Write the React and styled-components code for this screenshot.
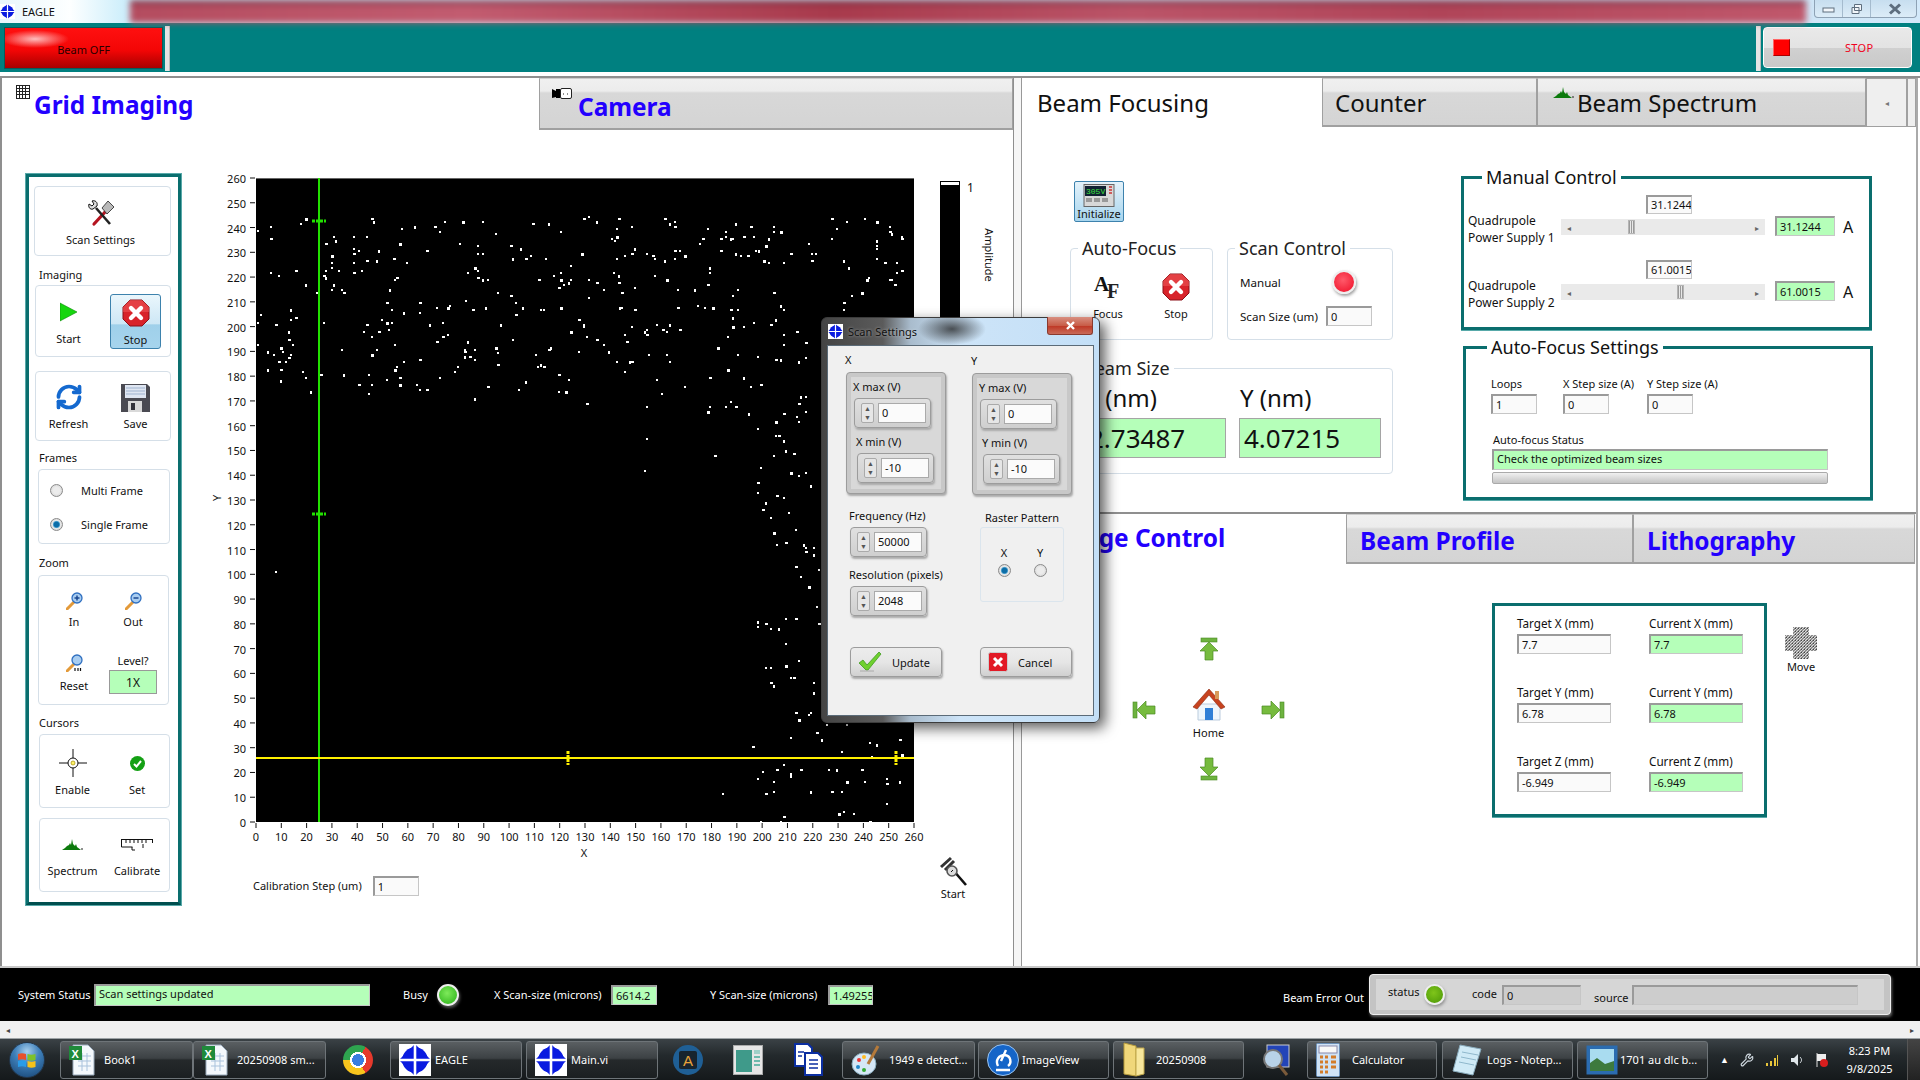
import React from "react";
import styled, { createGlobalStyle } from "styled-components";
import { RefreshCw, Wrench } from "lucide-react";

const UI = `"Noto Sans", "Liberation Sans", sans-serif`;
const GREEN = "#b5ffb9";
const TEAL = "#0a6e6e";

const GlobalStyle = createGlobalStyle`
  html, body { margin: 0; padding: 0; background: #fff; }
  body { font-family: ${UI}; font-size: 11px; color: #111; }
  * { box-sizing: border-box; }
`;

const Root = styled.div`
  position: relative;
  width: 1920px;
  height: 1080px;
  display: flex;
  flex-direction: column;
  overflow: hidden;
  background: #fff;
`;

/* title bar */
const TitleBar = styled.div`
  flex: 0 0 23px;
  display: flex;
  align-items: center;
  background: linear-gradient(90deg, #e8f6fc 0, #fdffff 70px, #cdeefb 125px, #cfe6f7 1810px, #d3e9fa 100%);
`;
const TitleText = styled.span`
  margin-left: 7px;
  width: 34px;
  font-size: 11px;
`;
const RedBlur = styled.div`
  flex: 0 0 1676px;
  margin-left: 74px;
  height: 23px;
  filter: blur(3px);
  background:
    linear-gradient(180deg, rgba(70, 20, 40, 0.55) 0, rgba(70, 20, 40, 0) 7px),
    linear-gradient(90deg, #b44c5f 0, #c25c70 20%, #a83a4c 42%, #bb5468 60%, #b04458 78%, #c0586c 100%);
`;
const WinButtons = styled.div`
  margin-left: 8px;
  display: grid;
  grid-template-columns: 28px 28px 47px;
  width: 103px;
  height: 18px;
  align-self: flex-start;
  border: 1px solid #8ea2b5;
  border-top: 0;
  border-radius: 0 0 4px 4px;
  background: linear-gradient(180deg, #c7deef, #dcecf8);
`;
const WinBtn = styled.div`
  display: flex;
  align-items: center;
  justify-content: center;
  border-right: 1px solid #a5bbce;
  &:last-child { border-right: 0; }
`;

/* teal toolbar */
const Toolbar = styled.div`
  flex: 0 0 49px;
  display: flex;
  align-items: flex-start;
  padding-top: 4px;
  background: #008080;
`;
const BeamOff = styled.div`
  margin-left: 4px;
  width: 159px;
  height: 42px;
  display: flex;
  align-items: center;
  justify-content: center;
  color: #2a0000;
  font-size: 11px;
  padding-top: 3px;
  border: 1px solid #0a5a5a;
  background:
    radial-gradient(ellipse 34px 9px at 30px 11px, rgba(255, 220, 220, 0.85), rgba(255, 0, 0, 0)),
    linear-gradient(180deg, #ff1010 0, #f40606 55%, #a80000 100%);
`;
const Sash = styled.div`
  flex: 0 0 5px;
  height: 45px;
  margin: ${(p) => p.$margin};
  background: #e4e4e4;
  border-right: 1px solid #bbb;
`;
const StopBtn = styled.div`
  width: 149px;
  height: 41px;
  margin-right: 8px;
  display: flex;
  align-items: center;
  border: 1px solid #fff;
  border-radius: 4px;
  background: linear-gradient(180deg, #e9e9e9 0, #e3e3e3 50%, #d0d0d0 52%, #c9c9c9 100%);
  color: #f00020;
  font-size: 11px;
`;
const StopSquare = styled.div`
  width: 17px;
  height: 17px;
  margin-left: 9px;
  background: #f00;
  border: 1px solid #a00;
  border-left-color: #f66;
  border-top-color: #f66;
`;
const StopLabel = styled.span`
  margin-left: 55px;
  letter-spacing: 0.3px;
`;

const TopGap = styled.div`
  flex: 0 0 6px;
  background: #fff;
  border-bottom: 2px solid #8f8f8f;
`;

/* panes */
const Workspace = styled.div`
  flex: 0 0 888px;
  display: flex;
  min-height: 0;
`;
const LeftPane = styled.div`
  width: 1014px;
  border-left: 2px solid #8f8f8f;
  border-right: 1px solid #8f8f8f;
  display: flex;
  flex-direction: column;
`;
const PaneSash = styled.div`
  width: 8px;
  background: #f6f6f6;
  border-right: 1px solid #999;
`;
const RightPane = styled.div`
  width: 896px;
  border-right: 2px solid #aaa;
  display: flex;
  flex-direction: column;
`;
const RightUpper = styled.div`
  flex: 0 0 434px;
  display: flex;
  flex-direction: column;
`;
const RightLower = styled.div`
  flex: 1;
  display: flex;
  flex-direction: column;
  border-top: 2px solid #8f8f8f;
`;

const TabStrip = styled.div`
  display: flex;
  flex: 0 0 ${(p) => p.$h}px;
`;
const Tab = styled.div`
  flex: 0 0 ${(p) => p.$w}px;
  display: flex;
  align-items: flex-start;
  padding-left: ${(p) => p.$pl || 0}px;
  padding-top: ${(p) => p.$pt ?? 7}px;
  font-size: ${(p) => (p.$blue ? 24.4 : 24)}px;
  line-height: 34px;
  font-weight: ${(p) => (p.$blue ? 700 : 400)};
  color: ${(p) => (p.$blue ? "#2300ff" : "#111")};
  white-space: nowrap;
  ${(p) =>
    p.$active
      ? "background: #fff;"
      : `background: linear-gradient(180deg, #f0f0f0 0, #ececec 12px, #d8d8d8 14px, #d4d4d4 100%);
         border: 1px solid #a0a0a0; border-bottom-width: 2px; border-top-color: #ccc;`}
`;
const TabIcon = styled.span`
  display: flex;
  margin-right: ${(p) => p.$mr}px;
  margin-top: ${(p) => p.$mt}px;
`;
const ScrollTab = styled.div`
  flex: 0 0 ${(p) => p.$w}px;
  display: flex;
  align-items: center;
  justify-content: center;
  background: #efefef;
  border: 1px solid #a0a0a0;
  color: #777;
  font-size: 8px;
`;

/* left pane body */
const LeftBody = styled.div`
  flex: 1;
  display: flex;
  align-items: flex-start;
  padding: 40px 0 0 24px;
`;
const SideBar = styled.div`
  flex: 0 0 155px;
  height: 731px;
  margin-top: 4px;
  padding: 9px 0 0 4px;
  border: 3px solid ${TEAL};
  border-bottom-color: #004f4f;
  box-shadow: 0 0 0 1px #58a9a9;
  display: flex;
  flex-direction: column;
`;
const SideLabel = styled.div`
  height: 14px;
  line-height: 14px;
  margin-top: ${(p) => p.$mt}px;
  margin-left: ${(p) => p.$ml}px;
  font-size: 11px;
`;
const SideBox = styled.div`
  width: ${(p) => p.$w}px;
  height: ${(p) => p.$h}px;
  margin-top: ${(p) => p.$mt}px;
  margin-left: ${(p) => p.$ml}px;
  padding-top: ${(p) => p.$pt || 0}px;
  border: 1px solid #d5dfe8;
  border-radius: 4px;
  display: grid;
  grid-template-columns: ${(p) => p.$cols || "65px 1fr"};
  align-content: start;
`;
const ToolItem = styled.div`
  display: flex;
  flex-direction: column;
  align-items: center;
  gap: ${(p) => p.$gap ?? 6}px;
  margin-top: ${(p) => p.$mt || 0}px;
`;
const ActiveTool = styled(ToolItem)`
  width: 51px;
  height: 55px;
  justify-self: center;
  margin-top: -4px;
  padding-top: 4px;
  border: 1px solid #3d82ad;
  border-radius: 3px;
  background: linear-gradient(180deg, #eaf6fc 0, #cde7f5 55%, #9fd0ea 56%, #a6d4ed 100%);
`;
const ToolIcon = styled.div`
  width: 100%;
  height: 28px;
  display: flex;
  align-items: center;
  justify-content: center;
`;
const ToolLabel = styled.div`
  line-height: 14px;
  font-size: 11px;
  white-space: nowrap;
`;
const RadioRow = styled.div`
  grid-column: 1 / -1;
  height: 34px;
  display: flex;
  align-items: center;
  gap: 18px;
  padding-left: 11px;
`;
const Radio = styled.div`
  width: 13px;
  height: 13px;
  flex: none;
  border-radius: 50%;
  border: 1px solid #8a8a8a;
  background: ${(p) =>
    p.$on
      ? "radial-gradient(circle, #0d6ea8 0 32%, #5aa9d4 42%, #e8e8e8 52%, #c8c8c8 100%)"
      : "radial-gradient(circle, #ececec 0 40%, #cfcfcf 100%)"};
`;
const LevelBox = styled.div`
  width: 48px;
  height: 24px;
  display: flex;
  align-items: center;
  justify-content: center;
  font-size: 12px;
  background: ${GREEN};
  border: 1px solid #999;
`;
const LevelItem = styled.div`
  display: flex;
  flex-direction: column;
  align-items: center;
  gap: 2px;
  align-self: end;
  margin-bottom: -1px;
`;

const PlotColumn = styled.div`
  flex: 0 0 800px;
  margin-left: 24px;
  display: flex;
  flex-direction: column;
`;
const PlotSvg = styled.svg`
  display: block;
  overflow: visible;
  font-family: ${UI};
`;
const CalibRow = styled.div`
  height: 48px;
  padding: 0 38px 5px 48px;
  display: flex;
  align-items: flex-end;
`;
const CalibLabel = styled.span`
  line-height: 20px;
  font-size: 11px;
  margin-right: 11px;
  white-space: nowrap;
`;
const StartTool = styled.div`
  margin-left: auto;
  display: flex;
  flex-direction: column;
  align-items: center;
  gap: 1px;
  margin-bottom: -5px;
`;

/* value boxes */
const Field = styled.div`
  width: ${(p) => p.$w}px;
  height: ${(p) => p.$h || 20}px;
  line-height: ${(p) => p.$lh || (p.$h || 20) - 2}px;
  margin: ${(p) => p.$margin || 0};
  padding-left: 3px;
  flex: none;
  font-size: 11px;
  white-space: nowrap;
  overflow: hidden;
  color: #111;
  background: ${(p) => (p.$green ? GREEN : p.$gray ? "#cdcdcd" : "#fafafa")};
  border: 1px solid #c6c6c6;
  border-top: 2px solid #9a9a9a;
  border-left: 2px solid #9a9a9a;
`;

/* right upper */
const UpperBody = styled.div`
  flex: 1;
  display: flex;
  padding-left: 48px;
`;
const UpperLeft = styled.div`
  flex: 0 0 323px;
  display: flex;
  flex-direction: column;
`;
const UpperRight = styled.div`
  flex: 0 0 413px;
  margin-left: 68px;
  display: flex;
  flex-direction: column;
`;
const InitBtn = styled.div`
  width: 50px;
  height: 41px;
  margin: 54px 0 0 4px;
  display: flex;
  flex-direction: column;
  align-items: center;
  font-size: 11px;
  line-height: 13px;
  padding-top: 2px;
  border: 1px solid #3d82ad;
  border-radius: 2px;
  background: linear-gradient(180deg, #e4f2fa, #a7d5ee);
`;
const GroupRow = styled.div`
  display: flex;
  margin-top: 14px;
  gap: 14px;
`;
const Group = styled.fieldset`
  width: ${(p) => p.$w}px;
  height: ${(p) => p.$h}px;
  margin: ${(p) => p.$margin || 0};
  padding: 0;
  min-width: 0;
  border: 1px solid #d5dfe8;
  border-radius: 4px;
`;
const GroupLegend = styled.legend`
  margin-left: ${(p) => p.$ml || 7}px;
  padding: 0 4px;
  font-size: 18px;
  line-height: 24px;
  color: #222;
`;
const AfGrid = styled.div`
  display: grid;
  grid-template-columns: 68px 68px;
  padding: 13px 0 0 3px;
`;
const ScanRows = styled.div`
  padding: 10px 0 0 12px;
  display: flex;
  flex-direction: column;
`;
const ScanRow = styled.div`
  height: ${(p) => p.$h}px;
  display: flex;
  align-items: center;
  justify-content: flex-start;
  font-size: 11.6px;
`;
const ScanLabel = styled.span`
  width: ${(p) => p.$w}px;
  white-space: nowrap;
`;
const BeamGrid = styled.div`
  display: grid;
  grid-template-columns: 142px 142px;
  column-gap: 13px;
  padding: 1px 0 0 13px;
`;
const BeamHead = styled.div`
  font-size: 24px;
  line-height: 34px;
  height: 34px;
  padding-left: 1px;
`;
const BeamValue = styled.div`
  height: 40px;
  margin-top: 3px;
  padding-left: 4px;
  font-size: 26px;
  line-height: 38px;
  background: ${GREEN};
  border: 1px solid #a5a5a5;
`;
const TealGroup = styled.fieldset`
  width: ${(p) => p.$w}px;
  height: 165px;
  margin: ${(p) => p.$margin};
  padding: 0;
  min-width: 0;
  border: 3px solid ${TEAL};
  box-shadow: 0 1px 0 #58a9a9;
`;
const TealLegend = styled.legend`
  margin-left: ${(p) => p.$ml}px;
  padding: 0 4px;
  font-size: 18px;
  line-height: 24px;
`;
const ManualRows = styled.div`
  padding: 6px 0 0 4px;
`;
const ManualRow = styled.div`
  height: 65px;
  display: grid;
  grid-template-columns: 93px 204px 10px 60px 22px;
  grid-template-rows: 19px auto;
`;
const SetPoint = styled(Field)`
  grid-column: 2;
  grid-row: 1;
  justify-self: start;
  margin-left: 85px;
  height: 19px;
  line-height: 16px;
  font-size: 11px;
`;
const QuadLabel = styled.div`
  grid-column: 1;
  grid-row: 2;
  margin-top: -2px;
  line-height: 17px;
  font-size: 12px;
  white-space: nowrap;
`;
const Slider = styled.div`
  grid-column: 2;
  grid-row: 2;
  margin-top: 5px;
  height: 16px;
  position: relative;
  display: flex;
  align-items: center;
  justify-content: space-between;
  padding: 0 6px;
  color: #666;
  font-size: 8px;
  background: #eaeaea;
`;
const SliderThumb = styled.div`
  position: absolute;
  top: 1px;
  width: 7px;
  height: 14px;
  background: repeating-linear-gradient(90deg, #9a9a9a 0 1px, #e8e8e8 1px 2px);
  border: 1px solid #b5b5b5;
`;
const OutCell = styled(Field)`
  grid-column: 4;
  grid-row: 2;
  margin-top: 2px;
`;
const UnitCell = styled.div`
  grid-column: 5;
  grid-row: 2;
  padding-left: 8px;
  font-size: 16px;
  line-height: 24px;
  margin-top: 1px;
`;
const StepGrid = styled.div`
  display: grid;
  grid-template-columns: 72px 84px auto;
  padding: 18px 0 0 25px;
  row-gap: 3px;
`;
const StepLabel = styled.div`
  line-height: 14px;
  font-size: 11px;
  white-space: nowrap;
`;
const StatusLabel = styled.div`
  margin: 19px 0 2px 27px;
  line-height: 14px;
  font-size: 11px;
`;
const StatusValue = styled(Field)`
  margin-left: 26px;
`;
const Progress = styled.div`
  width: 336px;
  height: 12px;
  margin: 2px 0 0 26px;
  border: 1px solid #aaa;
  border-radius: 2px;
  background: linear-gradient(180deg, #f0f0f0, #d5d5d5 60%, #c4c4c4);
`;

/* right lower */
const LowerBody = styled.div`
  flex: 1;
  display: flex;
  align-items: flex-start;
`;
const MoveGrid = styled.div`
  flex: none;
  margin: 73px 0 0 89px;
  width: 194px;
  display: grid;
  grid-template-columns: 65px 65px 64px;
  grid-template-rows: 51px 69px 24px;
  justify-items: center;
`;
const ArrowCell = styled.div`
  grid-column: ${(p) => p.$col};
  grid-row: ${(p) => p.$row};
  margin-top: ${(p) => p.$mt || 0}px;
  display: flex;
`;
const HomeCell = styled.div`
  grid-column: 2;
  grid-row: 2;
  display: flex;
  flex-direction: column;
  align-items: center;
  gap: 3px;
  font-size: 11px;
`;
const TargetBox = styled.div`
  flex: none;
  width: 275px;
  height: 214px;
  margin: 39px 0 0 187px;
  padding: 10px 0 0 22px;
  border: 3px solid ${TEAL};
  box-shadow: 0 1px 0 #58a9a9;
  display: grid;
  grid-template-columns: 132px 100px;
  grid-auto-rows: 69px;
`;
const TargetCell = styled.div`
  display: flex;
  flex-direction: column;
  gap: 4px;
  font-size: 11.7px;
  line-height: 14px;
`;
const MoveTool = styled.div`
  margin: 63px 0 0 18px;
  display: flex;
  flex-direction: column;
  align-items: center;
  font-size: 11px;
`;

/* status bar */
const StatusSep = styled.div`
  flex: 0 0 2px;
  background: #c8c8c8;
`;
const StatusBar = styled.div`
  flex: 0 0 53px;
  background: #000;
  display: flex;
  align-items: center;
  padding-left: 18px;
  color: #fff;
  font-size: 11px;
`;
const BarLabel = styled.span`
  flex: 0 0 ${(p) => p.$w}px;
  margin-left: ${(p) => p.$ml || 0}px;
  white-space: nowrap;
  margin-top: ${(p) => p.$mt || 0}px;
`;
const Led = styled.div`
  flex: none;
  width: ${(p) => p.$size || 22}px;
  height: ${(p) => p.$size || 22}px;
  border-radius: 50%;
  margin-left: ${(p) => p.$ml || 0}px;
  border: 2px solid #eee;
  background: radial-gradient(circle at 45% 40%, ${(p) => p.$light} 0, ${(p) => p.$dark} 90%);
  box-shadow: 1px 2px 3px rgba(120, 120, 120, 0.7);
`;
const ClusterBox = styled.div`
  flex: 0 0 522px;
  height: 41px;
  padding: 4px 6px;
  border: 1px solid #eee;
  border-radius: 4px;
  background: #c4c4c4;
  box-shadow: 1px 2px 3px rgba(170, 170, 170, 0.6);
`;
const ClusterInner = styled.div`
  height: 31px;
  display: flex;
  align-items: center;
  background: #d6d6d6;
  color: #111;
  font-size: 11px;
  padding-left: 12px;
`;

/* scroll strip */
const HScroll = styled.div`
  flex: 0 0 18px;
  display: flex;
  justify-content: space-between;
  align-items: center;
  padding: 0 6px;
  background: #f0f0f0;
  border-bottom: 1px solid #9da3a6;
  color: #444;
  font-size: 8px;
`;

/* taskbar */
const Taskbar = styled.div`
  flex: 0 0 41px;
  display: flex;
  align-items: center;
  color: #fff;
  font-size: 11px;
  background: linear-gradient(180deg, #3b4246 0, #23292c 40%, #15191b 100%);
`;
const StartOrb = styled.div`
  flex: none;
  width: 36px;
  height: 36px;
  margin-left: 9px;
  border-radius: 50%;
  border: 1px solid #23364a;
  display: flex;
  align-items: center;
  justify-content: center;
  background: radial-gradient(circle at 50% 25%, #a7cfee 0, #3f80ba 40%, #14416f 100%);
`;
const TaskBtn = styled.div`
  flex: 0 0 ${(p) => p.$w}px;
  margin-left: ${(p) => p.$ml || 0}px;
  height: 38px;
  display: flex;
  align-items: center;
  gap: ${(p) => p.$gap}px;
  padding-left: 8px;
  white-space: nowrap;
  overflow: hidden;
  border: 1px solid #6e7478;
  border-radius: 3px;
  background: linear-gradient(180deg, #5a5f62 0, #3c4144 45%, #25292b 50%, #1b1f21 100%);
`;
const PinIcon = styled.div`
  flex: 0 0 ${(p) => p.$w}px;
  margin-left: ${(p) => p.$ml || 0}px;
  height: 38px;
  display: flex;
  align-items: center;
  justify-content: center;
`;
const ChromeIcon = styled.div`
  width: 30px;
  height: 30px;
  border-radius: 50%;
  background:
    radial-gradient(circle, #3a7de0 0 27%, #fff 28% 38%, transparent 39%),
    conic-gradient(from 30deg, #e6392c 0 120deg, #f8c51d 120deg 240deg, #2ea44f 240deg 360deg);
`;
const Tray = styled.div`
  margin-left: 12px;
  display: flex;
  align-items: center;
  flex: 0 0 122px;
  gap: 11px;
  font-size: 9px;
`;
const Clock = styled.div`
  width: 56px;
  text-align: center;
  line-height: 18px;
  font-size: 11px;
`;
const ShowDesktop = styled.div`
  margin-left: 10px;
  flex: 0 0 13px;
  height: 41px;
  border-left: 1px solid #555;
  background: linear-gradient(180deg, #444, #222);
`;

/* dialog */
const Dialog = styled.div`
  position: absolute;
  left: 821px;
  top: 317px;
  width: 279px;
  height: 406px;
  padding: 0 5px 6px;
  display: flex;
  flex-direction: column;
  border: 1px solid #3c3c3c;
  border-radius: 6px;
  box-shadow: 5px 5px 14px rgba(0, 0, 0, 0.65);
  background:
    radial-gradient(ellipse 34px 16px at 130px 11px, rgba(30, 30, 30, 0.75), rgba(30, 30, 30, 0)),
    linear-gradient(90deg, #444 0, #5b5b5b 22%, #a9bccd 32%, #cde4f8 50%, #c3dff7 100%);
`;
const DialogTitle = styled.div`
  flex: 0 0 27px;
  display: flex;
  align-items: center;
  font-size: 11px;
  color: #111;
  position: relative;
  gap: 5px;
  padding-left: 1px;
  text-shadow: 0 0 3px rgba(255, 255, 255, 0.5);
`;
const CloseBtn = styled.div`
  position: absolute;
  right: 1px;
  top: -1px;
  width: 46px;
  height: 18px;
  display: flex;
  align-items: center;
  justify-content: center;
  border: 1px solid #8a3a2e;
  border-top: 0;
  border-radius: 0 0 3px 3px;
  background: linear-gradient(180deg, #d88f80 0, #c85d48 50%, #bf3a27 55%, #c96a58 100%);
`;
const DialogClient = styled.div`
  flex: 1;
  background: #f0f0f0;
  border: 1px solid #5b6b78;
  padding: 7px 0 0 17px;
  display: grid;
  grid-template-columns: 126px 122px;
  align-content: start;
`;
const DlgCol = styled.div`
  display: flex;
  flex-direction: column;
  margin-top: ${(p) => p.$mt || 0}px;
`;
const DlgText = styled.div`
  line-height: 14px;
  font-size: 11px;
  white-space: nowrap;
  margin: ${(p) => p.$margin || 0};
`;
const DlgGroup = styled.div`
  width: 100px;
  height: 122px;
  margin: 5px 0 0 1px;
  padding: 4px;
  border: 1px solid #9c9c9c;
  border-radius: 4px;
  background: #c8c8c8;
  box-shadow: 1px 2px 2px #aaa;
`;
const DlgGroupInner = styled.div`
  height: 100%;
  padding: 3px 0 0 2px;
  background: #d8d8d8;
`;
const Spinner = styled.div`
  width: 77px;
  height: 30px;
  margin: ${(p) => p.$margin};
  padding: 0 4px 0 6px;
  display: flex;
  align-items: center;
  gap: 4px;
  border: 1px solid #9c9c9c;
  border-radius: 4px;
  background: linear-gradient(180deg, #e0e0e0, #cfcfcf);
  box-shadow: 1px 2px 2px #aaa;
`;
const SpinArrows = styled.div`
  flex: 0 0 13px;
  height: 20px;
  display: grid;
  grid-template-rows: 1fr 1fr;
  border: 1px solid #aaa;
  border-radius: 2px;
  background: #e6e6e6;
  color: #555;
  font-size: 7px;
  line-height: 9px;
  text-align: center;
`;
const SpinInput = styled.div`
  flex: 1;
  height: 20px;
  line-height: 18px;
  padding-left: 3px;
  font-size: 11px;
  background: #fbfbfb;
  border: 1px solid #aaa;
`;
const RasterBox = styled.div`
  width: 84px;
  height: 75px;
  margin: 2px 0 0 9px;
  padding-top: 17px;
  border: 1px solid #dbe5ed;
  border-radius: 3px;
  display: grid;
  grid-template-columns: 36px 36px;
  justify-content: center;
  justify-items: center;
  align-content: start;
  row-gap: 4px;
`;
const DlgButton = styled.div`
  width: 92px;
  height: 30px;
  margin: ${(p) => p.$margin};
  display: flex;
  align-items: center;
  gap: 10px;
  padding-left: 7px;
  font-size: 11px;
  border: 1px solid #9c9c9c;
  border-radius: 4px;
  background: linear-gradient(180deg, #ececec 0, #e6e6e6 50%, #d0d0d0 100%);
  box-shadow: 1px 2px 2px #aaa;
`;

/* icons */
const EagleLogo = ({ size = 14 }) => (
  <svg width={size} height={size} viewBox="0 0 16 16" style={{ flex: "none" }}>
    <rect width="16" height="16" fill="#fff" />
    <path d="M8 0 16 8 8 16 0 8Z" fill="#0a1be0" />
    <circle cx="8" cy="8" r="6.4" fill="#0a1be0" />
    <path d="M8 0v16M0 8h16" stroke="#fff" strokeWidth="1.3" />
  </svg>
);
const GridIcon = () => (
  <svg width="14" height="14" viewBox="0 0 14 14">
    <rect x="0.5" y="0.5" width="13" height="13" fill="#fff" stroke="#222" />
    <path d="M3.5 0v14M6.5 0v14M9.5 0v14M0 3.5h14M0 6.5h14M0 9.5h14" stroke="#222" />
  </svg>
);
const CameraIcon = () => (
  <svg width="20" height="11" viewBox="0 0 20 11">
    <path d="M0 1l4 2V9L0 10Z" fill="#000" />
    <rect x="4" y="1" width="4" height="9" fill="#000" />
    <rect x="8.5" y="0.5" width="11" height="10" rx="1.5" fill="#fff" stroke="#222" />
    <path d="M11 6h1M15 6h1" stroke="#222" />
  </svg>
);
const ScanToolsIcon = () => (
  <svg width="28" height="28" viewBox="0 0 28 28">
    <path d="M7 25 19 12" stroke="#b51420" strokeWidth="3.2" strokeLinecap="round" />
    <path d="M15 9 21 2l6 6-7 7Z" fill="#b9b9b9" stroke="#222" strokeWidth="0.8" />
    <path d="M23 25 9 9" stroke="#222" strokeWidth="2.6" />
    <path d="M2 5l3 2 2-2-2-3c3-1 6 1 5 5l-4 3C3 11 1 8 2 5Z" fill="#dcdcdc" stroke="#111" strokeWidth="1" />
  </svg>
);
const PlayIcon = () => (
  <svg width="18" height="20" viewBox="0 0 18 20">
    <path d="M0 1 17 10 0 19Z" fill="#16d60e" stroke="#0a8a08" strokeWidth="0.6" />
  </svg>
);
const StopSign = ({ size = 28 }) => (
  <svg width={size} height={size} viewBox="0 0 28 28">
    <path d="M8 1h12l7 7v12l-7 7H8l-7-7V8Z" fill="#d8232a" stroke="#8c1118" />
    <path d="M8 1h12l7 7v5H1V8Z" fill="#ee5a5a" opacity="0.55" />
    <path d="M9 9 19 19M19 9 9 19" stroke="#fff" strokeWidth="4.4" strokeLinecap="round" />
  </svg>
);
const FloppyIcon = () => (
  <svg width="29" height="29" viewBox="0 0 29 29">
    <path d="M0 1h26l3 3v25H0Z" fill="#4a4a52" />
    <rect x="4" y="2" width="21" height="13" fill="#dfe6f2" />
    <path d="M5 5h19M5 8h19M5 11h19" stroke="#9fb3cf" />
    <rect x="7" y="18" width="14" height="11" fill="#d9d9d9" />
    <rect x="10" y="20" width="4" height="7" fill="#33333b" />
  </svg>
);
const Magnifier = ({ kind }) => (
  <svg width="17" height="18" viewBox="0 0 17 18">
    <path d="M1 17 8 10" stroke="#e39a3a" strokeWidth="3" strokeLinecap="round" />
    <circle cx="11" cy="6" r="5" fill="#a9cdf0" stroke="#2f6fc0" strokeWidth="1.3" />
    {kind !== "reset" && <path d="M8.5 6h5" stroke="#12408c" strokeWidth="1.4" />}
    {kind === "in" && <path d="M11 3.5v5" stroke="#12408c" strokeWidth="1.4" />}
    {kind === "reset" && <path d="M9 14v3M12 14v3M14.5 14v3" stroke="#111" strokeWidth="1.2" />}
  </svg>
);
const CrossHair = () => (
  <svg width="28" height="28" viewBox="0 0 28 28">
    <path d="M14 0v28M0 14h28" stroke="#111" />
    <circle cx="14" cy="14" r="5" fill="#fff" stroke="#111" />
    <circle cx="14" cy="14" r="2" fill="#fff36a" stroke="#a08a00" strokeWidth="0.7" />
  </svg>
);
const CheckDot = () => (
  <svg width="15" height="15" viewBox="0 0 15 15">
    <circle cx="7.5" cy="7.5" r="7.5" fill="#14a014" />
    <path d="M4 8l2.5 2.5L11 5" stroke="#fff" strokeWidth="2" fill="none" />
  </svg>
);
const SpectrumIcon = ({ w = 21, h = 12 }) => (
  <svg width={w} height={h} viewBox="0 0 21 12">
    <path d="M0 12h19l-4-3-1-3-1 2-1-1-1-1-1-5-1 6-1-2-1 2-2 1-2 2Z" fill="#0c7a0c" />
    <path d="M20 10v2" stroke="#222" />
  </svg>
);
const RulerIcon = () => (
  <svg width="32" height="13" viewBox="0 0 32 13">
    <path d="M0.5 1v8h11M31.5 1v4M0.5 1.5h31" stroke="#111" fill="none" />
    <path d="M5 1v4M9 1v4M13 1v4M17 1v4M21 1v4M25 1v4" stroke="#111" />
    <path d="M11 9v3h3M22 6v4" stroke="#111" fill="none" />
  </svg>
);
const CaliperIcon = () => (
  <svg width="28" height="30" viewBox="0 0 28 30">
    <path d="M14 14 27 29" stroke="#111" strokeWidth="2.6" />
    <path d="M2 11 12 2M6 14 15 5" stroke="#333" strokeWidth="3" />
    <circle cx="13" cy="15" r="5" fill="#ddd" stroke="#555" strokeWidth="1.6" />
    <path d="M12 16l2-2" stroke="#111" />
  </svg>
);
const AfIcon = () => (
  <svg width="32" height="28" viewBox="0 0 32 28">
    <text x="2" y="18" fontFamily="Liberation Serif, serif" fontWeight="700" fontSize="21" fill="#111">A</text>
    <text x="15" y="25" fontFamily="Liberation Serif, serif" fontWeight="700" fontSize="20" fill="#222">F</text>
  </svg>
);
const MeterIcon = () => (
  <svg width="32" height="23" viewBox="0 0 32 23">
    <rect x="1" y="0.5" width="30" height="22" fill="#d8d8d8" stroke="#666" />
    <rect x="2" y="2" width="21" height="10" fill="#123" />
    <text x="3" y="10" fontSize="8" fontFamily="Liberation Mono, monospace" fill="#3fe03f">305V</text>
    <path d="M26 3h3M26 6h3M26 9h3" stroke="#c33" strokeWidth="1.5" />
    <path d="M3 16h6M11 16h6M19 16h6" stroke="#999" strokeWidth="4" />
  </svg>
);
const GreenArrow = ({ dir }) => {
  const rot = { up: 0, down: 180, left: -90, right: 90 }[dir];
  return (
    <svg width="24" height="24" viewBox="0 0 24 24" style={{ transform: `rotate(${rot}deg)` }}>
      <rect x="4" y="1" width="16" height="4" fill="#6db33f" stroke="#4a8a22" strokeWidth="0.6" />
      <path d="M12 5 21 14H16V23H8V14H3Z" fill="#76bb3e" stroke="#4a8a22" strokeWidth="0.7" />
    </svg>
  );
};
const HomeIcon = () => (
  <svg width="34" height="34" viewBox="0 0 34 34">
    <path d="M6 16h22v16H6Z" fill="#eef6fc" stroke="#bcd" />
    <rect x="13" y="20" width="8" height="12" fill="#2f7fd6" />
    <path d="M17 1 33 19 29 21 17 7 5 21 1 19Z" fill="#c7431f" stroke="#8a2a12" strokeWidth="0.6" />
    <rect x="23" y="3" width="4" height="8" fill="#d89a5a" />
  </svg>
);
const MoveIcon = () => (
  <svg width="32" height="32" viewBox="0 0 32 32">
    <defs>
      <pattern id="noise" width="3" height="3" patternUnits="userSpaceOnUse">
        <rect width="3" height="3" fill="#8c8c8c" />
        <path d="M0 0h1v1H0ZM2 1h1v1H2ZM1 2h1v1H1Z" fill="#dedede" />
        <path d="M1 1h1v1H1Z" fill="#444" />
      </pattern>
    </defs>
    <path d="M8 0h16v8h8v16h-8v8H8v-8H0V8h8Z" fill="url(#noise)" />
  </svg>
);
const XLogo = () => (
  <svg width="9" height="9" viewBox="0 0 9 9">
    <path d="M1 1 8 8M8 1 1 8" stroke="#fff" strokeWidth="2.4" />
  </svg>
);
const WinIcon = ({ kind }) => (
  <svg width="16" height="12" viewBox="0 0 16 12">
    {kind === "min" && <rect x="2" y="5" width="11" height="4" fill="#f2f6fa" stroke="#5e6e7e" />}
    {kind === "max" && (
      <path d="M5.5 1.5h7v6h-7ZM3 4.5h7v6H3Z" fill="#f2f6fa" stroke="#5e6e7e" />
    )}
    {kind === "close" && <path d="M3 1.5 13 10.5M13 1.5 3 10.5" stroke="#5e6e7e" strokeWidth="3" />}
  </svg>
);
const UpdateCheck = () => (
  <svg width="24" height="22" viewBox="0 0 24 22">
    <path d="M1 12 5 9l4 5L21 1l2 2L10 19 8 19Z" fill="#6fd02f" stroke="#3f9a20" strokeWidth="0.8" />
    <path d="M2 20h14" stroke="#aaa" />
  </svg>
);
const CancelBox = () => (
  <svg width="20" height="20" viewBox="0 0 20 20">
    <rect x="0.5" y="0.5" width="19" height="19" rx="2" fill="#e21a26" stroke="#ccc" />
    <path d="M6 6l8 8M14 6l-8 8" stroke="#fff" strokeWidth="3" />
  </svg>
);
const ExcelIcon = () => (
  <svg width="26" height="32" viewBox="0 0 26 32">
    <path d="M4 1h15l6 6v24H4Z" fill="#f4f8fc" stroke="#9ab" />
    <path d="M9 12h13M9 17h13M9 22h13M13 9v18M18 9v18" stroke="#a9c2dc" />
    <rect x="0" y="2" width="13" height="14" fill="#1f8a3a" />
    <text x="2.5" y="13.5" fontSize="11" fontWeight="700" fill="#fff" fontFamily="Liberation Sans, sans-serif">X</text>
  </svg>
);
const DocsIcon = () => (
  <svg width="32" height="34" viewBox="0 0 32 34">
    <path d="M3 1h13l4 4v18H3Z" fill="#fff" stroke="#0b2ea0" strokeWidth="2" />
    <path d="M13 10h13l4 4v18H13Z" fill="#fff" stroke="#0b2ea0" strokeWidth="2" />
    <path d="M17 17h9M17 21h9M17 25h9M6 9h6M6 13h4" stroke="#0b2ea0" strokeWidth="1.5" />
  </svg>
);
const AIcon = () => (
  <svg width="30" height="36" viewBox="0 0 30 36">
    <circle cx="15" cy="18" r="15" fill="#1f5f95" />
    <rect x="6" y="9" width="18" height="18" rx="2" fill="#17242e" />
    <text x="10" y="24" fontSize="15" fill="#e8a33a" fontFamily="Liberation Sans, sans-serif">A</text>
  </svg>
);
const WindowIcon = () => (
  <svg width="30" height="30" viewBox="0 0 30 30">
    <rect x="0.5" y="0.5" width="29" height="29" fill="#e6e6e6" stroke="#aaa" />
    <rect x="3" y="5" width="16" height="22" fill="#3f9a8a" />
    <rect x="21" y="5" width="6" height="4" fill="#9fd0c8" />
    <path d="M21 12h6M21 16h6M21 20h6" stroke="#4a9" strokeWidth="1.5" />
  </svg>
);
const PaintIcon = () => (
  <svg width="30" height="32" viewBox="0 0 30 32">
    <ellipse cx="13" cy="20" rx="12" ry="11" fill="#d5e7f6" stroke="#8ab" />
    <circle cx="8" cy="16" r="2" fill="#e33" />
    <circle cx="13" cy="13" r="2" fill="#fb2" />
    <circle cx="7" cy="23" r="2" fill="#28c" />
    <circle cx="13" cy="26" r="2" fill="#3a3" />
    <path d="M17 20 27 2" stroke="#b57a3a" strokeWidth="3" />
  </svg>
);
const MicroIcon = () => (
  <svg width="32" height="34" viewBox="0 0 32 34">
    <circle cx="16" cy="17" r="15.5" fill="#1565c8" stroke="#9cc4ee" />
    <path d="M9 27h14M19 7l-5 11M11 23c-3-6 1-11 7-11 6 1 7 8 3 11" stroke="#fff" strokeWidth="2.4" fill="none" />
  </svg>
);
const FolderIcon = () => (
  <svg width="24" height="36" viewBox="0 0 24 36">
    <path d="M2 1 14 4v30l-12-2Z" fill="#f0d77a" stroke="#b59a3a" />
    <path d="M14 6h8v26l-8 2Z" fill="#f8e79c" stroke="#c0a74a" />
  </svg>
);
const SearchScreenIcon = () => (
  <svg width="30" height="34" viewBox="0 0 30 34">
    <rect x="6" y="2" width="22" height="22" fill="#2244b8" stroke="#ccc" />
    <circle cx="12" cy="16" r="9" fill="#b8d2e8" stroke="#777" strokeWidth="2" />
    <path d="M18 22l8 10" stroke="#7a5a3a" strokeWidth="3" />
  </svg>
);
const CalcIcon = () => (
  <svg width="24" height="34" viewBox="0 0 24 34">
    <rect x="0.5" y="0.5" width="23" height="33" rx="1" fill="#cfe2f5" stroke="#6a8fb8" />
    <rect x="3" y="3" width="18" height="7" fill="#f8f8f8" stroke="#88a" />
    <path d="M4 14h3M9 14h3M15 14h5M4 19h3M9 19h3M15 19h5M4 24h3M9 24h3M15 24h5M4 29h3M9 29h3" stroke="#d37c2a" strokeWidth="3" />
  </svg>
);
const NotepadIcon = () => (
  <svg width="32" height="34" viewBox="0 0 32 34">
    <path d="M9 2 30 6 22 32 2 28Z" fill="#cfeaf6" stroke="#8ab" />
    <path d="M11 9 27 12M10 14 25 17M8 19 23 22" stroke="#8fb8cc" />
  </svg>
);
const PhotoIcon = () => (
  <svg width="32" height="30" viewBox="0 0 32 30">
    <rect x="0.5" y="0.5" width="31" height="29" fill="#2b6cb0" />
    <rect x="4" y="4" width="24" height="22" fill="#a9dcf0" />
    <path d="M4 26V18l7-5 8 6 9-3v10Z" fill="#3d7a3d" />
  </svg>
);

/* plot data, read off the image as [x, y] in page pixels */
const Z9 = [
  [151,145],[139,159],[69,168],[303,145],[307,152],[40,180],[69,204],[372,175],[402,168],[448,168],[471,153],[459,182],[512,153],[558,153],[588,188],[674,160],[710,160],[739,182],[792,145],[803,138],[821,153],[872,145],[867,175],[902,168],[867,197],[856,204],[862,211],[977,145],[989,160],[1001,153],[1001,168],[1077,175],[1141,160],[1176,168],[1228,168],[1228,182],[1246,182],[1118,182],[1118,197],[1107,204],[1129,204],[1135,204],[1159,197],[1182,197],[1217,204],[1362,145],[1397,153],[1439,145],[1467,153],[1374,175],[1496,168],[1496,182],[1502,190],[1525,197],[1525,204],[1362,204],[1467,211],[1065,204],[1059,218],[1309,218],[1211,226],[1467,226],[1467,233],[1107,241],[1141,248],[1153,255],[1170,255],[1188,241],[1194,241],[1269,248],[1316,248],[1327,248],[1205,270],[1217,277],[1252,277],[1316,270],[1391,270],[1467,263],[1485,277],[1513,277],[1403,292],[1525,299],[1513,307],[1449,321],[1444,328],[1496,328],[1502,328],[1508,343],[1082,292],[1082,307],[1077,343],
  [214,197],[220,211],[197,218],[261,197],[290,197],[366,218],[506,218],[546,226],[622,226],[645,233],[261,233],[261,248],[273,241],[319,241],[430,241],[546,248],[558,248],[209,255],[209,277],[209,292],[290,270],[313,270],[261,277],[353,263],[383,277],[628,263],[657,263],[668,255],[704,263],[786,248],[867,263],[885,255],[902,248],[908,233],[937,248],[949,255],[954,263],[977,270],[1001,241],[1013,241],[1001,263],[1024,255],[762,285],
  [197,299],[191,314],[197,321],[226,299],[261,307],[278,299],[151,343],[127,299],[69,307],[87,314],[539,292],[546,299],[523,307],[546,321],[558,328],[570,328],[360,321],[354,328],[343,358],[687,328],[721,314],[739,307],[739,328],[762,328],[744,343],[733,350],[756,336],[803,328],[821,336],[861,307],[872,314],[872,336],[908,350],[954,314],[983,328],[209,358],[232,358],[238,365],[215,343],[175,365],
  [336,396],[348,418],[377,425],[412,396],[412,425],[453,411],[477,411],[483,404],[518,389],[535,418],[564,411],[593,367],[622,374],[634,396],[651,411],[634,432],[692,418],[698,418],[739,411],[803,381],[838,358],[879,367],[873,411],[879,411],[908,418],[1007,358],[1048,358],[1007,411],[1053,404],[1071,411],[1088,411],[1135,374],[1147,358],[1228,367],[1246,404],[1252,418],[1129,418],[1147,418],[1135,440],[1391,396],[1391,418],[1409,374],[1432,367],
  [45,432],[40,455],[81,462],[115,418],[115,447],[127,440],[191,455],[180,484],[290,462],[284,484],[325,447],[336,455],[348,455],[342,476],[319,484],[436,462],[465,455],[465,499],[477,492],[599,462],[780,447],[792,462],[792,469],[762,484],[902,469],[960,462],[972,476],[989,462],[983,484],[1013,476],[937,476],[931,484],[937,492],[885,492],[797,499],[1135,469],[1159,469],[1182,455],[1223,462],[1234,447],[1252,492],[1281,484],[1124,499],
  [110,484],[110,506],[121,521],[40,521],[92,530],[98,543],[115,552],[110,560],[63,543],[75,552],[87,574],[104,574],[63,596],[92,596],[232,536],[313,536],[302,552],[302,499],[354,521],[453,514],[523,514],[517,536],[517,543],[540,536],[517,558],[529,558],[540,566],[593,545],[588,530],[628,506],[681,552],[710,536],[716,530],[780,543],[821,506],[838,521],[849,543],[890,514],[942,552],[983,552],[1100,530],[1147,552],[1193,558],[1234,566],[1246,566],[1252,521],[1304,516],[1304,560],[1286,574],
  [412,566],[377,574],[360,589],[354,596],[500,589],[494,604],[593,581],[692,581],[686,589],[698,589],[867,574],[896,574],[902,574],[989,574],[885,604],[1124,596],
  [144,604],[151,620],[185,611],[238,611],[296,611],[366,620],[459,620],[92,630],[273,641],[302,641],[336,627],[366,641],[406,641],[412,656],[430,656],[162,662],[296,670],[570,649],[640,656],[657,633],[733,611],[756,627],[733,662],[750,662],[960,627],[1024,649],[1082,620],[1159,620],[1176,649],[1199,641],[971,670],[540,685],[797,700],
  [937,708],[1082,708],[1077,722],[1130,692],[1118,708],[1141,708],[1292,678],[1304,678],[1286,700],[1304,722],[1171,730],[1252,730],[1281,738],[1286,752],[1234,752],[1193,774],[1234,796],[1240,796],[1252,811],[937,803],[1094,856],[1228,856],[1257,841],[1275,848],[1199,892],[931,899],[1269,907],[1286,914],[1304,907],[1193,937],[1315,944],
];
const Z10 = [
  [112,517],[167,524],[189,532],[136,547],[127,568],[204,575],[151,590],[159,635],[226,628],[167,672],[196,665],[249,672],[256,680],[256,694],[279,680],[279,702],[226,738],[241,769],[294,746],[264,798],[288,857],[196,895],[226,895],[112,902],[112,917],[136,910],[151,924],[174,924],[294,908],[196,968],[234,1021],[196,1035],[136,1042],[151,1042],[151,1086],[159,1094],[211,1072],[218,1072],[279,1087],[279,1117],[226,1175],[271,1175],[264,1183],[234,1197],
  [317,1213],[377,1213],[288,1235],[302,1257],[211,1250],[97,1279],[447,1265],[469,1272],[537,1257],[363,1294],[454,1308],[544,1301],[189,1331],[127,1353],[167,1346],[211,1360],[211,1367],[241,1346],[325,1346],[347,1346],[424,1346],[112,1375],[159,1382],[377,1382],[432,1382],[499,1375],[499,1390],[537,1382],[7,1420],[136,1420],[159,1412],[271,1412],[333,1412],[363,1412],[499,1450],[355,1480],[370,1472],[400,1480],[189,1487],[120,1502],[181,1502],[447,1502],
];
const DOTS = [
  ...Z9.map(([x, y]) => [Math.round(240 + x / 2.306), Math.round(170 + y / 3)]),
  ...Z10.map(([x, y]) => [Math.round(720 + x / 3), Math.round(320 + y / 3)]),
  [275, 571],
];
const TICKS = Array.from({ length: 27 }, (_, i) => i * 10);
const xAt = (v) => 256 + (v * 658) / 260;
const yAt = (v) => 822 - (v * 644) / 260;

const PlotChart = () => (
  <PlotSvg width="800" height="683" viewBox="205 170 800 683">
    <rect x="256" y="178" width="658" height="644" fill="#000" />
    <path d="M256 178.5H914" stroke="#666" />
    {DOTS.map(([x, y], i) => (
      <rect key={i} x={x} y={y} width={i % 3 === 0 ? 3 : 2} height={i % 4 === 0 ? 3 : 2} fill="#fff" shapeRendering="crispEdges" />
    ))}
    <path d="M319 178V822" stroke="#22e000" strokeWidth="2" />
    <path d="M256 758H914" stroke="#fff000" strokeWidth="2" />
    <g stroke="#22e000" strokeWidth="3" fill="none">
      <path d="M312 221h14M312 514h14" strokeDasharray="3 1" />
    </g>
    <g stroke="#fff000" strokeWidth="3" fill="none">
      <path d="M568 751v14M896 751v14" strokeDasharray="3 1" />
    </g>
    {TICKS.map((v) => (
      <g key={v} stroke="#111">
        <path d={`M250 ${yAt(v)}H255`} />
        <path d={`M${xAt(v)} 823V828`} />
      </g>
    ))}
    <g fontSize="11" fill="#111">
      {TICKS.map((v) => (
        <text key={v} x="246" y={yAt(v) + 5} textAnchor="end">{v}</text>
      ))}
      {TICKS.map((v) => (
        <text key={v} x={xAt(v)} y="841" textAnchor="middle">{v}</text>
      ))}
      <text x="584" y="857" textAnchor="middle">X</text>
      <text transform="translate(221 498) rotate(-90)" textAnchor="middle">Y</text>
      <text x="967" y="192" fontSize="12">1</text>
      <text transform="translate(985 255) rotate(90)" textAnchor="middle">Amplitude</text>
    </g>
    <rect x="940.5" y="181.5" width="19" height="320" fill="#000" stroke="#000" />
    <rect x="941" y="182" width="18" height="3" fill="#fff" />
  </PlotSvg>
);

const SpinBox = ({ value, margin }) => (
  <Spinner $margin={margin}>
    <SpinArrows>
      <span>▲</span>
      <span>▼</span>
    </SpinArrows>
    <SpinInput>{value}</SpinInput>
  </Spinner>
);

const ScanDialog = () => (
  <Dialog>
    <DialogTitle>
      <EagleLogo size={15} />
      Scan Settings
      <CloseBtn><XLogo /></CloseBtn>
    </DialogTitle>
    <DialogClient>
      <DlgCol>
        <DlgText>X</DlgText>
        <DlgGroup>
          <DlgGroupInner>
            <DlgText>X max (V)</DlgText>
            <SpinBox value="0" margin="4px 0 0 1px" />
            <DlgText $margin="7px 0 0 3px">X min (V)</DlgText>
            <SpinBox value="-10" margin="4px 0 0 4px" />
          </DlgGroupInner>
        </DlgGroup>
      </DlgCol>
      <DlgCol $mt={1}>
        <DlgText>Y</DlgText>
        <DlgGroup>
          <DlgGroupInner>
            <DlgText>Y max (V)</DlgText>
            <SpinBox value="0" margin="4px 0 0 1px" />
            <DlgText $margin="7px 0 0 3px">Y min (V)</DlgText>
            <SpinBox value="-10" margin="4px 0 0 4px" />
          </DlgGroupInner>
        </DlgGroup>
      </DlgCol>
      <DlgCol>
        <DlgText $margin="14px 0 0 4px">Frequency (Hz)</DlgText>
        <SpinBox value="50000" margin="4px 0 0 5px" />
        <DlgText $margin="11px 0 0 4px">Resolution (pixels)</DlgText>
        <SpinBox value="2048" margin="4px 0 0 5px" />
      </DlgCol>
      <DlgCol>
        <DlgText $margin="16px 0 0 14px">Raster Pattern</DlgText>
        <RasterBox>
          <span>X</span>
          <span>Y</span>
          <Radio $on />
          <Radio />
        </RasterBox>
      </DlgCol>
      <DlgButton $margin="31px 0 0 5px">
        <UpdateCheck />
        Update
      </DlgButton>
      <DlgButton $margin="31px 0 0 9px">
        <CancelBox />
        Cancel
      </DlgButton>
    </DialogClient>
  </Dialog>
);

const TaskButton = ({ w = 132, ml, gap = 4, icon, label }) => (
  <TaskBtn $w={w} $ml={ml} $gap={gap}>
    {icon}
    {label}
  </TaskBtn>
);

export default function App() {
  return (
    <Root>
      <GlobalStyle />
      <TitleBar>
        <EagleLogo size={15} />
        <TitleText>EAGLE</TitleText>
        <RedBlur />
        <WinButtons>
          <WinBtn><WinIcon kind="min" /></WinBtn>
          <WinBtn><WinIcon kind="max" /></WinBtn>
          <WinBtn><WinIcon kind="close" /></WinBtn>
        </WinButtons>
      </TitleBar>

      <Toolbar>
        <BeamOff>Beam OFF</BeamOff>
        <Sash $margin="-1px auto 0 2px" />
        <Sash $margin="-1px 2px 0 0" />
        <StopBtn>
          <StopSquare />
          <StopLabel>STOP</StopLabel>
        </StopBtn>
      </Toolbar>
      <TopGap />

      <Workspace>
        <LeftPane>
          <TabStrip $h={52}>
            <Tab $w={537} $active $blue $pl={14} $pt={10}>
              <TabIcon $mr={4} $mt={-3}><GridIcon /></TabIcon>
              Grid Imaging
            </Tab>
            <Tab $w={474} $blue $pl={12} $pt={11}>
              <TabIcon $mr={6} $mt={-2}><CameraIcon /></TabIcon>
              Camera
            </Tab>
          </TabStrip>
          <LeftBody>
            <SideBar>
              <SideBox $w={137} $h={70} $ml={1} $pt={12} $cols="131px">
                <ToolItem>
                  <ToolIcon><ScanToolsIcon /></ToolIcon>
                  <ToolLabel>Scan Settings</ToolLabel>
                </ToolItem>
              </SideBox>
              <SideLabel $mt={12} $ml={6}>Imaging</SideLabel>
              <SideBox $w={136} $h={72} $mt={3} $ml={2} $pt={12}>
                <ToolItem>
                  <ToolIcon><PlayIcon /></ToolIcon>
                  <ToolLabel>Start</ToolLabel>
                </ToolItem>
                <ActiveTool>
                  <ToolIcon><StopSign /></ToolIcon>
                  <ToolLabel>Stop</ToolLabel>
                </ActiveTool>
              </SideBox>
              <SideBox $w={136} $h={70} $mt={14} $ml={2} $pt={11}>
                <ToolItem>
                  <ToolIcon><RefreshCw size={28} color="#1469cf" strokeWidth={3.2} /></ToolIcon>
                  <ToolLabel>Refresh</ToolLabel>
                </ToolItem>
                <ToolItem>
                  <ToolIcon><FloppyIcon /></ToolIcon>
                  <ToolLabel>Save</ToolLabel>
                </ToolItem>
              </SideBox>
              <SideLabel $mt={10} $ml={6}>Frames</SideLabel>
              <SideBox $w={132} $h={75} $mt={4} $ml={5} $pt={3} $cols="1fr">
                <RadioRow>
                  <Radio />
                  <span>Multi Frame</span>
                </RadioRow>
                <RadioRow>
                  <Radio $on />
                  <span>Single Frame</span>
                </RadioRow>
              </SideBox>
              <SideLabel $mt={12} $ml={6}>Zoom</SideLabel>
              <SideBox $w={131} $h={130} $mt={5} $ml={5} $pt={11} $cols="70px 48px">
                <ToolItem $gap={-2}>
                  <ToolIcon><Magnifier kind="in" /></ToolIcon>
                  <ToolLabel>In</ToolLabel>
                </ToolItem>
                <ToolItem $gap={-2}>
                  <ToolIcon><Magnifier kind="out" /></ToolIcon>
                  <ToolLabel>Out</ToolLabel>
                </ToolItem>
                <ToolItem $gap={2} $mt={20}>
                  <ToolIcon><Magnifier kind="reset" /></ToolIcon>
                  <ToolLabel>Reset</ToolLabel>
                </ToolItem>
                <LevelItem>
                  <ToolLabel>Level?</ToolLabel>
                  <LevelBox>1X</LevelBox>
                </LevelItem>
              </SideBox>
              <SideLabel $mt={11} $ml={6}>Cursors</SideLabel>
              <SideBox $w={131} $h={74} $mt={4} $ml={6} $pt={14}>
                <ToolItem>
                  <ToolIcon><CrossHair /></ToolIcon>
                  <ToolLabel>Enable</ToolLabel>
                </ToolItem>
                <ToolItem>
                  <ToolIcon><CheckDot /></ToolIcon>
                  <ToolLabel>Set</ToolLabel>
                </ToolItem>
              </SideBox>
              <SideBox $w={131} $h={74} $mt={10} $ml={6} $pt={11}>
                <ToolItem>
                  <ToolIcon><SpectrumIcon /></ToolIcon>
                  <ToolLabel>Spectrum</ToolLabel>
                </ToolItem>
                <ToolItem>
                  <ToolIcon><RulerIcon /></ToolIcon>
                  <ToolLabel>Calibrate</ToolLabel>
                </ToolItem>
              </SideBox>
            </SideBar>
            <PlotColumn>
              <PlotChart />
              <CalibRow>
                <CalibLabel>Calibration Step (um)</CalibLabel>
                <Field $w={46}>1</Field>
                <StartTool>
                  <CaliperIcon />
                  <ToolLabel>Start</ToolLabel>
                </StartTool>
              </CalibRow>
            </PlotColumn>
          </LeftBody>
        </LeftPane>
        <PaneSash />
        <RightPane>
          <RightUpper>
            <TabStrip $h={49}>
              <Tab $w={300} $active $pl={15} $pt={8}>Beam Focusing</Tab>
              <Tab $w={215} $pl={12} $pt={7}>Counter</Tab>
              <Tab $w={329} $pl={15} $pt={7}>
                <TabIcon $mr={3} $mt={0}><SpectrumIcon /></TabIcon>
                Beam Spectrum
              </Tab>
              <ScrollTab $w={41}>◂</ScrollTab>
              <ScrollTab $w={9} />
            </TabStrip>
            <UpperBody>
              <UpperLeft>
                <InitBtn>
                  <MeterIcon />
                  Initialize
                </InitBtn>
                <GroupRow>
                  <Group $w={143} $h={104}>
                    <GroupLegend>Auto-Focus</GroupLegend>
                    <AfGrid>
                      <ToolItem>
                        <ToolIcon><AfIcon /></ToolIcon>
                        <ToolLabel>Focus</ToolLabel>
                      </ToolItem>
                      <ToolItem>
                        <ToolIcon><StopSign /></ToolIcon>
                        <ToolLabel>Stop</ToolLabel>
                      </ToolItem>
                    </AfGrid>
                  </Group>
                  <Group $w={166} $h={104}>
                    <GroupLegend>Scan Control</GroupLegend>
                    <ScanRows>
                      <ScanRow $h={24}>
                        <ScanLabel $w={92}>Manual</ScanLabel>
                        <Led $light="#ff5a6a" $dark="#f0142c" $size={24} />
                      </ScanRow>
                      <ScanRow $h={44}>
                        <ScanLabel $w={86}>Scan Size (um)</ScanLabel>
                        <Field $w={46}>0</Field>
                      </ScanRow>
                    </ScanRows>
                  </Group>
                </GroupRow>
                <Group $w={323} $h={118} $margin="16px 0 0">
                  <GroupLegend $ml={8}>Beam Size</GroupLegend>
                  <BeamGrid>
                    <BeamHead>X (nm)</BeamHead>
                    <BeamHead>Y (nm)</BeamHead>
                    <BeamValue>2.73487</BeamValue>
                    <BeamValue>4.07215</BeamValue>
                  </BeamGrid>
                </Group>
              </UpperLeft>
              <UpperRight>
                <TealGroup $w={411} $margin="38px 0 0">
                  <TealLegend $ml={18}>Manual Control</TealLegend>
                  <ManualRows>
                    <ManualRow>
                      <SetPoint $w={46}>31.1244</SetPoint>
                      <QuadLabel>Quadrupole<br />Power Supply 1</QuadLabel>
                      <Slider>
                        <span>◂</span>
                        <SliderThumb style={{ left: 67 }} />
                        <span>▸</span>
                      </Slider>
                      <OutCell $w={60} $green>31.1244</OutCell>
                      <UnitCell>A</UnitCell>
                    </ManualRow>
                    <ManualRow>
                      <SetPoint $w={46}>61.0015</SetPoint>
                      <QuadLabel>Quadrupole<br />Power Supply 2</QuadLabel>
                      <Slider>
                        <span>◂</span>
                        <SliderThumb style={{ left: 116 }} />
                        <span>▸</span>
                      </Slider>
                      <OutCell $w={60} $green>61.0015</OutCell>
                      <UnitCell>A</UnitCell>
                    </ManualRow>
                  </ManualRows>
                </TealGroup>
                <TealGroup $w={410} $margin="5px 0 0 2px">
                  <TealLegend $ml={21}>Auto-Focus Settings</TealLegend>
                  <StepGrid>
                    <StepLabel>Loops</StepLabel>
                    <StepLabel>X Step size (A)</StepLabel>
                    <StepLabel>Y Step size (A)</StepLabel>
                    <Field $w={46}>1</Field>
                    <Field $w={46}>0</Field>
                    <Field $w={46}>0</Field>
                  </StepGrid>
                  <StatusLabel>Auto-focus Status</StatusLabel>
                  <StatusValue $w={336} $h={21} $lh={16} $green>Check the optimized beam sizes</StatusValue>
                  <Progress />
                </TealGroup>
              </UpperRight>
            </UpperBody>
          </RightUpper>

          <RightLower>
            <TabStrip $h={50}>
              <Tab $w={324} $active $blue $pl={38} $pt={7}>Stage Control</Tab>
              <Tab $w={287} $blue $pl={13} $pt={9}>Beam Profile</Tab>
              <Tab $w={282} $blue $pl={13} $pt={9}>Lithography</Tab>
            </TabStrip>
            <LowerBody>
              <MoveGrid>
                <ArrowCell $col={2} $row={1}><GreenArrow dir="up" /></ArrowCell>
                <ArrowCell $col={1} $row={2} $mt={10}><GreenArrow dir="left" /></ArrowCell>
                <HomeCell>
                  <HomeIcon />
                  Home
                </HomeCell>
                <ArrowCell $col={3} $row={2} $mt={10}><GreenArrow dir="right" /></ArrowCell>
                <ArrowCell $col={2} $row={3}><GreenArrow dir="down" /></ArrowCell>
              </MoveGrid>
              <TargetBox>
                <TargetCell>Target X (mm)<Field $w={94}>7.7</Field></TargetCell>
                <TargetCell>Current X (mm)<Field $w={94} $green>7.7</Field></TargetCell>
                <TargetCell>Target Y (mm)<Field $w={94}>6.78</Field></TargetCell>
                <TargetCell>Current Y (mm)<Field $w={94} $green>6.78</Field></TargetCell>
                <TargetCell>Target Z (mm)<Field $w={94}>-6.949</Field></TargetCell>
                <TargetCell>Current Z (mm)<Field $w={94} $green>-6.949</Field></TargetCell>
              </TargetBox>
              <MoveTool>
                <MoveIcon />
                Move
              </MoveTool>
            </LowerBody>
          </RightLower>
        </RightPane>
      </Workspace>

      <StatusSep />
      <StatusBar>
        <BarLabel $w={76}>System Status</BarLabel>
        <Field $w={276} $h={22} $lh={15} $green>Scan settings updated</Field>
        <BarLabel $w={34} $ml={33}>Busy</BarLabel>
        <Led $light="#7eea5a" $dark="#2fb51c" />
        <BarLabel $w={117} $ml={35}>X Scan-size (microns)</BarLabel>
        <Field $w={46} $green>6614.2</Field>
        <BarLabel $w={118} $ml={53}>Y Scan-size (microns)</BarLabel>
        <Field $w={45} $green>1.49255</Field>
        <BarLabel $w={86} $ml={410} $mt={6}>Beam Error Out</BarLabel>
        <ClusterBox>
          <ClusterInner>
            <BarLabel $w={36} $mt={-6}>status</BarLabel>
            <Led $light="#7fc51a" $dark="#4f9a08" $size={21} />
            <BarLabel $w={30} $ml={27} $mt={-3}>code</BarLabel>
            <Field $w={79} $gray>0</Field>
            <BarLabel $w={38} $ml={13} $mt={6}>source</BarLabel>
            <Field $w={226} $gray />
          </ClusterInner>
        </ClusterBox>
      </StatusBar>
      <HScroll>
        <span>◂</span>
        <span>▸</span>
      </HScroll>

      <Taskbar>
        <StartOrb>
          <svg width="20" height="20" viewBox="0 0 20 20">
            <path d="M1 4c3-1 5-1 8 0v6c-3-1-5-1-8 0Z" fill="#e8502a" />
            <path d="M10.5 4c3 1 5 1 8 0v6c-3 1-5 1-8 0Z" fill="#7ec22a" />
            <path d="M1 11c3-1 5-1 8 0v6c-3-1-5-1-8 0Z" fill="#2a9ce8" />
            <path d="M10.5 11c3 1 5 1 8 0v6c-3 1-5 1-8 0Z" fill="#f6c21a" />
          </svg>
        </StartOrb>
        <TaskButton w={133} ml={15} gap={9} icon={<ExcelIcon />} label="Book1" />
        <TaskButton w={133} gap={9} icon={<ExcelIcon />} label="20250908 sm..." />
        <PinIcon $w={35} $ml={14}><ChromeIcon /></PinIcon>
        <TaskButton w={132} ml={15} icon={<EagleLogo size={32} />} label="EAGLE" />
        <TaskButton w={132} ml={4} icon={<EagleLogo size={32} />} label="Main.vi" />
        <PinIcon $w={60}><AIcon /></PinIcon>
        <PinIcon $w={60}><WindowIcon /></PinIcon>
        <PinIcon $w={60}><DocsIcon /></PinIcon>
        <TaskButton w={133} ml={4} gap={8} icon={<PaintIcon />} label="1949 e detect..." />
        <TaskButton w={131} ml={3} gap={3} icon={<MicroIcon />} label="ImageView" />
        <TaskButton w={131} ml={4} gap={10} icon={<FolderIcon />} label="20250908" />
        <PinIcon $w={63}><SearchScreenIcon /></PinIcon>
        <TaskButton w={130} gap={12} icon={<CalcIcon />} label="Calculator" />
        <TaskButton w={131} ml={5} icon={<NotepadIcon />} label="Logs - Notep..." />
        <TaskButton w={131} ml={4} gap={2} icon={<PhotoIcon />} label="1701 au dlc b..." />
        <Tray>
          <span>▲</span>
          <Wrench size={14} color="#cfd8df" />
          <svg width="14" height="14" viewBox="0 0 14 14">
            <path d="M1 13h2v-3H1ZM5 13h2V8H5ZM9 13h2V5H9ZM12 13h1V2h-1Z" fill="#e8c53a" />
          </svg>
          <svg width="14" height="14" viewBox="0 0 14 14">
            <path d="M1 5h3l4-4v12L4 9H1Z" fill="#dfe6ea" />
            <path d="M10 4c2 2 2 4 0 6" stroke="#dfe6ea" fill="none" />
          </svg>
          <svg width="14" height="16" viewBox="0 0 14 16">
            <path d="M2 1v14" stroke="#ddd" />
            <path d="M2 2h9v7H2Z" fill="#eee" />
            <circle cx="9" cy="11" r="4" fill="#d81e1e" />
          </svg>
        </Tray>
        <Clock>
          8:23 PM
          <br />
          9/8/2025
        </Clock>
        <ShowDesktop />
      </Taskbar>

      <ScanDialog />
    </Root>
  );
}
